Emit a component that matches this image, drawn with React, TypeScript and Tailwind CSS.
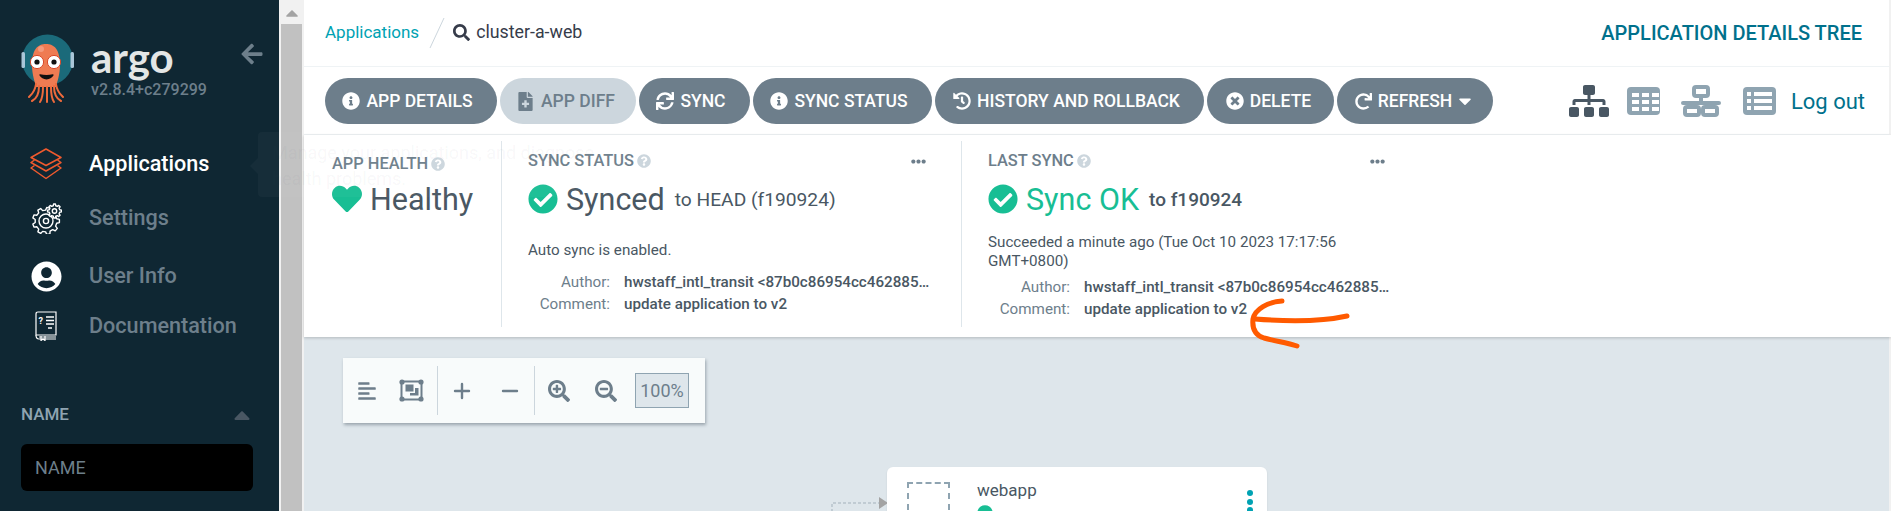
import React from 'react';
import {
  FaArrowLeft, FaUserCircle, FaInfoCircle, FaFileMedical, FaSync, FaHistory, FaTimesCircle, FaRedo,
  FaCaretDown, FaCaretUp, FaSitemap, FaHeart, FaCheckCircle, FaEllipsisH,
  FaQuestionCircle, FaAlignLeft, FaSearchPlus, FaSearchMinus, FaSearch, FaCircle,
} from 'react-icons/fa';
import { Plus, Minus } from 'lucide-react';

function Logo() {
  return (
    <svg width="54" height="70" viewBox="0 0 54 70" className="shrink-0">
      <circle cx="26.5" cy="27" r="25.5" fill="#1b6a7a" />
      <rect x="0.5" y="19" width="3.5" height="16" rx="1.5" fill="#a9c6d8" />
      <rect x="49.5" y="19" width="3.5" height="16" rx="1.5" fill="#a9c6d8" />
      <path d="M11 32C11 16 17 11 25 11S39 16 39 32C39 42 36 49 35 54H15C14 49 11 42 11 32Z" fill="#ef7b52" />
      <path d="M15 51C14 59 10 62 8 64M18 53C18 61 15 66 11 68M22 54C22 62 21 66 19 69M26 54C26 62 26 66 26 69M30 54C30 62 31 66 33 69M33 53C33 61 36 66 40 68M35 51C36 59 40 62 42 64" stroke="#ef6a3c" strokeWidth="2" fill="none" strokeLinecap="round" />
      <circle cx="16" cy="29" r="6.6" fill="#fff" stroke="#d9492a" strokeWidth="1" />
      <circle cx="33" cy="29" r="6.6" fill="#fff" stroke="#d9492a" strokeWidth="1" />
      <circle cx="16" cy="29" r="2.6" fill="#111" />
      <circle cx="33" cy="29" r="2.6" fill="#111" />
      <path d="M19 42C22 47 29 47 32 42C28 43 23 43 19 42Z" fill="#111" stroke="#111" strokeWidth="1.4" strokeLinejoin="round" />
      <circle cx="20" cy="16" r="3" fill="#f49a7c" />
    </svg>
  );
}

function LayersIcon() {
  return (
    <svg width="32" height="32" viewBox="0 0 32 32" fill="none" stroke="#ef5a2e" strokeWidth="1.5" strokeLinejoin="round">
      <path d="M16 1L31 9.5L16 17.5L1 9.5Z" />
      <path d="M4.5 12L1 14.5L16 23L31 14.5L27.5 12" />
      <path d="M4.5 17.5L1 20L16 30.5L31 20L27.5 17.5" />
    </svg>
  );
}

function gearPath(cx: number, cy: number, r: number, teeth: number, depth: number) {
  const pts: string[] = [];
  const step = (Math.PI * 2) / teeth;
  for (let i = 0; i < teeth; i++) {
    const a = i * step;
    const seq: [number, number][] = [[a - step * 0.3, r - depth], [a - step * 0.17, r], [a + step * 0.17, r], [a + step * 0.3, r - depth]];
    seq.forEach(([t, rad]) => pts.push(`${(cx + rad * Math.cos(t)).toFixed(2)} ${(cy + rad * Math.sin(t)).toFixed(2)}`));
  }
  return `M${pts.join('L')}Z`;
}

function GearsIcon() {
  return (
    <svg width="31" height="31" viewBox="0 0 31 31" fill="none" stroke="#fff" strokeWidth="1.4" strokeLinejoin="round">
      <path d={gearPath(15, 18, 13.5, 9, 2.6)} />
      <circle cx="15" cy="18" r="7" />
      <circle cx="15" cy="18" r="2.6" />
      <path d={gearPath(23.5, 8, 7, 8, 1.6)} fill="#0f2733" />
      <circle cx="23.5" cy="8" r="2.2" />
    </svg>
  );
}

function BookIcon() {
  return (
    <svg width="22" height="30" viewBox="0 0 22 30" fill="none" stroke="#fff" strokeWidth="1.2">
      <path d="M1 24V3Q1 1 3 1H21V24Z" />
      <path d="M1 24Q1 28 4 28H21M4 26H21" />
      <path d="M6 25V29.5L8 28L10 29.5V25" />
      <path d="M11 6H19M11 9.5H19M11 13H19M13 17H17" strokeWidth="1.4" />
      <text x="3.6" y="12.5" fontSize="9" fill="#fff" stroke="none" fontWeight="700" fontFamily="Roboto">?</text>
    </svg>
  );
}

function FitIcon() {
  return (
    <svg width="25" height="23" viewBox="0 0 25 23" fill="#6d7e8b">
      <rect x="2.5" y="2.5" width="20" height="18" fill="none" stroke="#6d7e8b" strokeWidth="2" />
      <circle cx="3" cy="3" r="2.6" /><circle cx="22" cy="3" r="2.6" />
      <circle cx="3" cy="20" r="2.6" /><circle cx="22" cy="20" r="2.6" />
      <rect x="6.5" y="5.5" width="8" height="7" /><path d="M11 14H16V9H19.5V16.5H11Z" />
    </svg>
  );
}

function GridIcon() {
  const xs = [5, 15, 25];
  const ys = [6, 13, 20];
  return (
    <svg width="33" height="28" viewBox="0 0 33 28">
      <rect width="33" height="28" rx="4" fill="#8fa4b1" />
      {ys.map((y) => xs.map((x) => <rect key={`${x}-${y}`} x={x} y={y} width="7" height="4" fill="#fff" />))}
    </svg>
  );
}

function NetworkIcon() {
  return (
    <svg width="40" height="32" viewBox="0 0 40 32" fill="none" stroke="#8fa4b1" strokeWidth="4">
      <rect x="13" y="2" width="14" height="9" rx="2" />
      <path d="M20 11V18M2 18H38" strokeLinecap="round" />
      <path d="M11 18V22M29 18V22" />
      <rect x="4" y="22" width="14" height="8" rx="2" />
      <rect x="22" y="22" width="14" height="8" rx="2" />
    </svg>
  );
}

function ListIcon() {
  return (
    <svg width="33" height="28" viewBox="0 0 33 28">
      <rect width="33" height="28" rx="4" fill="#8fa4b1" />
      {[5, 12, 19].map((y) => (
        <g key={y}>
          <rect x="4" y={y} width="4" height="4" fill="#fff" />
          <rect x="11" y={y} width="18" height="4" fill="#fff" />
        </g>
      ))}
    </svg>
  );
}

function NavItem({ icon, label, active, className }: { icon: React.ReactNode; label: string; active?: boolean; className: string }) {
  return (
    <div className={`flex items-center ${className}`}>
      <div className="w-[32px] flex justify-center">{icon}</div>
      <span className={`ml-[27px] text-[21.6px] font-medium leading-none ${active ? 'text-white' : 'text-[#6d7f8b]'}`}>{label}</span>
    </div>
  );
}

function Btn({ icon, children, disabled, className }: { icon: React.ReactNode; children: React.ReactNode; disabled?: boolean; className: string }) {
  return (
    <div className={`h-[46px] rounded-full flex items-center justify-center gap-[6px] text-[17.5px] font-medium whitespace-nowrap ${disabled ? 'bg-[#ccd6dd] text-[#6d7e8b]' : 'bg-[#6d7e8b] text-white'} ${className}`}>
      {icon}
      <span className="inline-flex items-center gap-[3px]">{children}</span>
    </div>
  );
}

function Title({ children }: { children: React.ReactNode }) {
  return (
    <div className="flex items-center gap-[3px] text-[16.4px] font-medium leading-none text-[#6d7e8b]">
      <span>{children}</span>
      <FaQuestionCircle className="text-[#ccd6dd]" size={14} />
    </div>
  );
}

function Meta({ label, value, className }: { label: string; value: string; className?: string }) {
  return (
    <div className={`flex text-[15.2px] leading-[22px] text-[#495763] ${className ?? ''}`}>
      <span className="w-[82px] shrink-0 text-right text-[#6d7e8b] whitespace-nowrap">{label}</span>
      <span className="ml-[14px] w-[306px] shrink-0 truncate font-medium">{value}</span>
    </div>
  );
}

const author = 'hwstaff_intl_transit <87b0c86954cc462885a9f3c1>';

export default function App() {
  return (
    <div className="relative flex h-[511px] w-[1891px] overflow-hidden bg-white font-['Roboto',sans-serif]">
      {/* sidebar */}
      <aside className="w-[279px] shrink-0 bg-[#0f2733] flex flex-col">
        <div className="flex items-start pl-[21px] pt-[33px]">
          <Logo />
          <div className="ml-[16px] -mt-[1px]">
            <div className="text-[42px] leading-[50px] font-bold text-[#e3e6e6] font-['Lato',sans-serif]">argo</div>
            <div className="text-[16px] leading-[18px] -mt-[1px] font-medium text-[#6d7f8b] whitespace-nowrap">v2.8.4+c279299</div>
          </div>
          <FaArrowLeft size={24} className="ml-[33px] mt-[9px] text-[#6d7f8b]" />
        </div>
        <NavItem className="ml-[30px] mt-[45px] h-[32px]" active icon={<LayersIcon />} label="Applications" />
        <NavItem className="ml-[30px] mt-[23px] h-[30px]" icon={<GearsIcon />} label="Settings" />
        <NavItem className="ml-[30px] mt-[27px] h-[32px]" icon={<FaUserCircle size={31} className="text-white" />} label="User Info" />
        <NavItem className="ml-[30px] mt-[19px] h-[30px]" icon={<BookIcon />} label="Documentation" />
        <div className="ml-[21px] mr-[26px] mt-[61px] flex items-center justify-between">
          <span className="text-[17px] font-medium text-[#8fa4b1]">NAME</span>
          <FaCaretUp size={26} className="text-[#495763] -mr-[2px]" />
        </div>
        <div className="ml-[21px] mr-[26px] mt-[16px] h-[47px] rounded-[6px] bg-black flex items-center pl-[14px] text-[18px] text-[#6d7f8b]">NAME</div>
      </aside>

      {/* scrollbar */}
      <div className="w-[25px] shrink-0 bg-[#f1f1f1] flex flex-col items-center">
        <FaCaretUp size={18} className="text-[#a3a3a3] mt-[3px] h-[20px]" />
        <div className="w-[21px] flex-1 bg-[#c1c1c1] mt-[1px]" />
      </div>

      {/* main */}
      <main className="relative flex-1 min-w-0 flex flex-col bg-[#dee6eb]">
        <header className="h-[67px] shrink-0 bg-white border-b border-[#eff3f5] flex items-center pl-[21px] pr-[29px] pb-[1px]">
          <span className="text-[17px] text-[#00a2b3]">Applications</span>
          <svg width="16" height="32" viewBox="0 0 16 32" className="ml-[10px]"><path d="M15 1L1 31" stroke="#ccd6dd" strokeWidth="1" /></svg>
          <FaSearch size={17} className="ml-[8px] text-[#363c4a]" />
          <span className="ml-[6px] text-[17.8px] text-[#363c4a]">cluster-a-web</span>
          <span className="ml-auto text-[20px] font-medium text-[#00718c]">APPLICATION DETAILS TREE</span>
        </header>
        <div className="h-[68px] shrink-0 bg-white border-b border-[#eff3f5] flex items-start pt-[11px] pl-[21px]">
          <div className="flex gap-[3px]">
            <Btn className="w-[172px] pr-[7px]" icon={<FaInfoCircle size={18} />}>APP DETAILS</Btn>
            <Btn className="w-[136px] pr-[5px]" disabled icon={<FaFileMedical size={19} />}>APP DIFF</Btn>
            <Btn className="w-[111px] pr-[7px]" icon={<FaSync size={18} />}>SYNC</Btn>
            <Btn className="w-[179px] pr-[7px]" icon={<FaInfoCircle size={18} />}>SYNC STATUS</Btn>
            <Btn className="w-[269px] pr-[6px]" icon={<FaHistory size={18} />}>HISTORY AND ROLLBACK</Btn>
            <Btn className="w-[127px] pr-[4px]" icon={<FaTimesCircle size={18} />}>DELETE</Btn>
            <Btn className="w-[156px]" icon={<FaRedo size={17} />}>REFRESH<FaCaretDown size={20} /></Btn>
          </div>
          <div className="ml-auto mr-[26px] h-[46px] flex items-center">
            <FaSitemap size={40} className="text-[#495763]" />
            <div className="ml-[18px] flex"><GridIcon /></div>
            <div className="ml-[21px] flex"><NetworkIcon /></div>
            <div className="ml-[22px] flex"><ListIcon /></div>
            <span className="ml-[15px] text-[22px] text-[#00718c]">Log out</span>
          </div>
        </div>

        {/* status panel */}
        <section className="h-[202px] shrink-0 bg-white shadow-[0_1px_3px_rgba(0,0,0,0.2)] flex pt-[6px] pb-[10px] z-10">
          <div className="w-[197px] pl-[28px] pt-[15px]">
            <Title>APP HEALTH</Title>
            <div className="mt-[7px] flex items-center h-[40px]">
              <FaHeart size={30} className="text-[#18be94]" />
              <span className="ml-[8px] text-[30.5px] text-[#495763]">Healthy</span>
            </div>
          </div>
          <div className="w-[460px] border-l border-[#dee6eb] pl-[26px] pr-[35px] pt-[12px]">
            <div className="flex justify-between items-center">
              <Title>SYNC STATUS</Title>
              <FaEllipsisH size={15} className="text-[#6d7e8b]" />
            </div>
            <div className="mt-[10px] flex items-center h-[40px]">
              <FaCheckCircle size={30} className="text-[#18be94]" />
              <span className="ml-[8px] text-[30.5px] text-[#495763]">Synced</span>
              <span className="ml-[10px] text-[19.2px] text-[#495763] mt-[2px] whitespace-nowrap">to HEAD (f190924)</span>
            </div>
            <div className="mt-[21px] text-[15.2px] leading-[20px] text-[#495763]">Auto sync is enabled.</div>
            <Meta className="mt-[11px]" label="Author:" value={author} />
            <Meta label="Comment:" value="update application to v2" />
          </div>
          <div className="w-[460px] border-l border-[#dee6eb] pl-[26px] pr-[36px] pt-[12px]">
            <div className="flex justify-between items-center">
              <Title>LAST SYNC</Title>
              <FaEllipsisH size={15} className="text-[#6d7e8b]" />
            </div>
            <div className="mt-[10px] flex items-center h-[40px]">
              <FaCheckCircle size={30} className="text-[#18be94]" />
              <span className="ml-[8px] text-[30.5px] text-[#18be94]">Sync OK</span>
              <span className="ml-[10px] text-[19px] font-medium text-[#495763] mt-[2px]">to f190924</span>
            </div>
            <div className="mt-[14px] text-[15.2px] leading-[19px] text-[#495763] w-[370px]">Succeeded a minute ago (Tue Oct 10 2023 17:17:56 GMT+0800)</div>
            <Meta className="mt-[5px]" label="Author:" value={author} />
            <Meta label="Comment:" value="update application to v2" />
          </div>
        </section>

        {/* canvas */}
        <div className="relative flex-1">
          <div className="absolute left-[39px] top-[21px] h-[65px] w-[362px] bg-[#f8fbfb] shadow-[1px_2px_3px_rgba(73,87,99,0.45)] flex items-center text-[#6d7e8b]">
            <div className="w-[94px] flex items-center justify-center gap-[22px]">
              <FaAlignLeft size={20} />
              <FitIcon />
            </div>
            <div className="w-px h-[49px] bg-[#ccd6dd]" />
            <div className="w-[96px] flex items-center justify-center gap-[24px]">
              <Plus size={24} strokeWidth={2.4} />
              <Minus size={24} strokeWidth={2.4} />
            </div>
            <div className="w-px h-[49px] bg-[#ccd6dd]" />
            <div className="flex items-center ml-[13px] gap-[25px]">
              <FaSearchPlus size={22} />
              <FaSearchMinus size={22} />
            </div>
            <div className="ml-[18px] w-[54px] h-[35px] border border-[#8fa4b1] bg-[#dee6eb] flex items-center justify-center text-[18px] text-[#6d7e8b]">100%</div>
          </div>

          <svg className="absolute left-[525px] top-[160px]" width="60" height="20" viewBox="0 0 60 20" fill="none">
            <path d="M3 20V6H50" stroke="#a3b1bb" strokeWidth="1" strokeDasharray="3 2" />
            <path d="M50 0L59 6L50 12Z" fill="#a3a3a3" />
          </svg>

          <div className="absolute left-[583px] top-[130px] w-[380px] h-[60px] rounded-t-[6px] bg-white shadow-[0_1px_2px_rgba(0,0,0,0.1)] overflow-hidden">
            <div className="absolute left-[20px] top-[15px] w-[43px] h-[50px] border-2 border-dashed border-[#8fa4b1]" />
            <div className="absolute left-[90px] top-[13px] text-[17px] leading-[20px] text-[#495763]">webapp</div>
            <FaCircle size={16} className="absolute left-[90px] top-[38px] text-[#18be94]" />
            <div className="absolute left-[360px] top-[23px] flex flex-col gap-[2.5px]">
              <div className="w-[6px] h-[6px] rounded-full bg-[#00a2b3]" />
              <div className="w-[6px] h-[6px] rounded-full bg-[#00a2b3]" />
              <div className="w-[6px] h-[6px] rounded-full bg-[#00a2b3]" />
            </div>
          </div>
        </div>
      </main>

      {/* right scrollbar sliver */}
      <div className="absolute right-0 top-0 h-full w-[2px] bg-[#f1f1f1]" />

      {/* fading tooltip over the panel */}
      <div className="absolute z-20 left-[250px] top-[158px] h-0 w-0 border-y-[8px] border-r-[8px] border-y-transparent border-r-[rgba(255,255,255,0.03)]" />
      <div className="absolute z-20 left-[258px] top-[132px] w-[370px] h-[65px] rounded-[4px] bg-[rgba(255,255,255,0.03)] pl-[14px] pt-[8px] text-[18px] leading-[26px] text-[rgba(73,87,99,0.05)]">
        Manage your applications, and diagnose health problems.
      </div>

      {/* hand-drawn arrow annotation */}
      <svg className="absolute z-20 left-[1240px] top-[295px]" width="115" height="60" viewBox="0 0 115 60" fill="none" stroke="#ff5a00" strokeWidth="5" strokeLinecap="round">
        <path d="M42 6C28 7 15 14 13 24C12 33 15 40 24 43C35 46 48 48 57 51" />
        <path d="M15 24C40 26 80 27 107 21" />
      </svg>
    </div>
  );
}
